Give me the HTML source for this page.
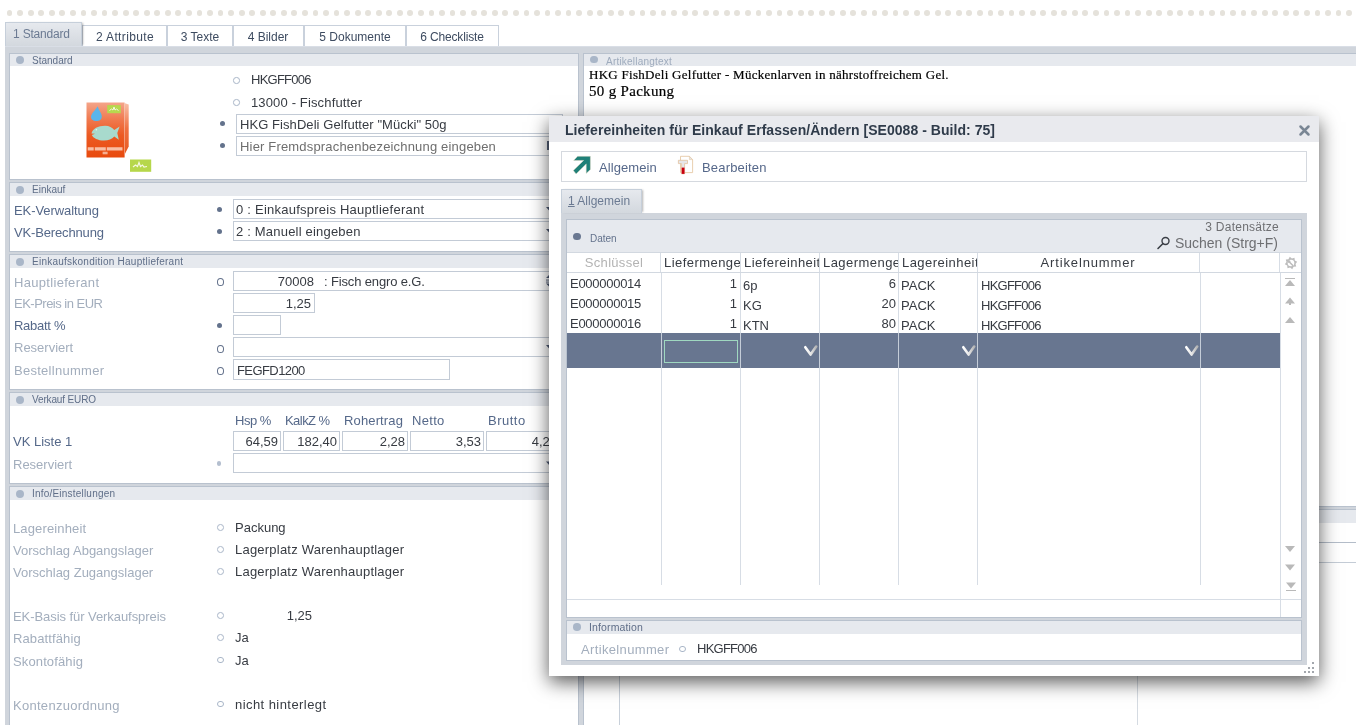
<!DOCTYPE html><html><head><meta charset="utf-8"><style>
*{margin:0;padding:0}
html,body{width:1356px;height:725px;overflow:hidden;background:#fff;position:relative}
body{font-family:'Liberation Sans', sans-serif}
.b{position:absolute}
.t{position:absolute;white-space:nowrap;font-family:'Liberation Sans', sans-serif;will-change:transform}
</style></head><body>
<div class="b" style="left:0;top:0;width:1356px;height:25px;overflow:hidden">
<div class="b" style="left:6.70px;top:10.10px;width:5.8px;height:5.8px;border-radius:50%;background:#e5e2db"></div>
<div class="b" style="left:17.25px;top:10.10px;width:5.8px;height:5.8px;border-radius:50%;background:#e5e2db"></div>
<div class="b" style="left:27.79px;top:10.10px;width:5.8px;height:5.8px;border-radius:50%;background:#e5e2db"></div>
<div class="b" style="left:38.34px;top:10.10px;width:5.8px;height:5.8px;border-radius:50%;background:#e5e2db"></div>
<div class="b" style="left:48.89px;top:10.10px;width:5.8px;height:5.8px;border-radius:50%;background:#e5e2db"></div>
<div class="b" style="left:59.44px;top:10.10px;width:5.8px;height:5.8px;border-radius:50%;background:#e5e2db"></div>
<div class="b" style="left:69.98px;top:10.10px;width:5.8px;height:5.8px;border-radius:50%;background:#e5e2db"></div>
<div class="b" style="left:80.53px;top:10.10px;width:5.8px;height:5.8px;border-radius:50%;background:#e5e2db"></div>
<div class="b" style="left:91.08px;top:10.10px;width:5.8px;height:5.8px;border-radius:50%;background:#e5e2db"></div>
<div class="b" style="left:101.62px;top:10.10px;width:5.8px;height:5.8px;border-radius:50%;background:#e5e2db"></div>
<div class="b" style="left:112.17px;top:10.10px;width:5.8px;height:5.8px;border-radius:50%;background:#e5e2db"></div>
<div class="b" style="left:122.72px;top:10.10px;width:5.8px;height:5.8px;border-radius:50%;background:#e5e2db"></div>
<div class="b" style="left:133.26px;top:10.10px;width:5.8px;height:5.8px;border-radius:50%;background:#e5e2db"></div>
<div class="b" style="left:143.81px;top:10.10px;width:5.8px;height:5.8px;border-radius:50%;background:#e5e2db"></div>
<div class="b" style="left:154.36px;top:10.10px;width:5.8px;height:5.8px;border-radius:50%;background:#e5e2db"></div>
<div class="b" style="left:164.91px;top:10.10px;width:5.8px;height:5.8px;border-radius:50%;background:#e5e2db"></div>
<div class="b" style="left:175.45px;top:10.10px;width:5.8px;height:5.8px;border-radius:50%;background:#e5e2db"></div>
<div class="b" style="left:186.00px;top:10.10px;width:5.8px;height:5.8px;border-radius:50%;background:#e5e2db"></div>
<div class="b" style="left:196.55px;top:10.10px;width:5.8px;height:5.8px;border-radius:50%;background:#e5e2db"></div>
<div class="b" style="left:207.09px;top:10.10px;width:5.8px;height:5.8px;border-radius:50%;background:#e5e2db"></div>
<div class="b" style="left:217.64px;top:10.10px;width:5.8px;height:5.8px;border-radius:50%;background:#e5e2db"></div>
<div class="b" style="left:228.19px;top:10.10px;width:5.8px;height:5.8px;border-radius:50%;background:#e5e2db"></div>
<div class="b" style="left:238.73px;top:10.10px;width:5.8px;height:5.8px;border-radius:50%;background:#e5e2db"></div>
<div class="b" style="left:249.28px;top:10.10px;width:5.8px;height:5.8px;border-radius:50%;background:#e5e2db"></div>
<div class="b" style="left:259.83px;top:10.10px;width:5.8px;height:5.8px;border-radius:50%;background:#e5e2db"></div>
<div class="b" style="left:270.38px;top:10.10px;width:5.8px;height:5.8px;border-radius:50%;background:#e5e2db"></div>
<div class="b" style="left:280.92px;top:10.10px;width:5.8px;height:5.8px;border-radius:50%;background:#e5e2db"></div>
<div class="b" style="left:291.47px;top:10.10px;width:5.8px;height:5.8px;border-radius:50%;background:#e5e2db"></div>
<div class="b" style="left:302.02px;top:10.10px;width:5.8px;height:5.8px;border-radius:50%;background:#e5e2db"></div>
<div class="b" style="left:312.56px;top:10.10px;width:5.8px;height:5.8px;border-radius:50%;background:#e5e2db"></div>
<div class="b" style="left:323.11px;top:10.10px;width:5.8px;height:5.8px;border-radius:50%;background:#e5e2db"></div>
<div class="b" style="left:333.66px;top:10.10px;width:5.8px;height:5.8px;border-radius:50%;background:#e5e2db"></div>
<div class="b" style="left:344.20px;top:10.10px;width:5.8px;height:5.8px;border-radius:50%;background:#e5e2db"></div>
<div class="b" style="left:354.75px;top:10.10px;width:5.8px;height:5.8px;border-radius:50%;background:#e5e2db"></div>
<div class="b" style="left:365.30px;top:10.10px;width:5.8px;height:5.8px;border-radius:50%;background:#e5e2db"></div>
<div class="b" style="left:375.85px;top:10.10px;width:5.8px;height:5.8px;border-radius:50%;background:#e5e2db"></div>
<div class="b" style="left:386.39px;top:10.10px;width:5.8px;height:5.8px;border-radius:50%;background:#e5e2db"></div>
<div class="b" style="left:396.94px;top:10.10px;width:5.8px;height:5.8px;border-radius:50%;background:#e5e2db"></div>
<div class="b" style="left:407.49px;top:10.10px;width:5.8px;height:5.8px;border-radius:50%;background:#e5e2db"></div>
<div class="b" style="left:418.03px;top:10.10px;width:5.8px;height:5.8px;border-radius:50%;background:#e5e2db"></div>
<div class="b" style="left:428.58px;top:10.10px;width:5.8px;height:5.8px;border-radius:50%;background:#e5e2db"></div>
<div class="b" style="left:439.13px;top:10.10px;width:5.8px;height:5.8px;border-radius:50%;background:#e5e2db"></div>
<div class="b" style="left:449.67px;top:10.10px;width:5.8px;height:5.8px;border-radius:50%;background:#e5e2db"></div>
<div class="b" style="left:460.22px;top:10.10px;width:5.8px;height:5.8px;border-radius:50%;background:#e5e2db"></div>
<div class="b" style="left:470.77px;top:10.10px;width:5.8px;height:5.8px;border-radius:50%;background:#e5e2db"></div>
<div class="b" style="left:481.32px;top:10.10px;width:5.8px;height:5.8px;border-radius:50%;background:#e5e2db"></div>
<div class="b" style="left:491.86px;top:10.10px;width:5.8px;height:5.8px;border-radius:50%;background:#e5e2db"></div>
<div class="b" style="left:502.41px;top:10.10px;width:5.8px;height:5.8px;border-radius:50%;background:#e5e2db"></div>
<div class="b" style="left:512.96px;top:10.10px;width:5.8px;height:5.8px;border-radius:50%;background:#e5e2db"></div>
<div class="b" style="left:523.50px;top:10.10px;width:5.8px;height:5.8px;border-radius:50%;background:#e5e2db"></div>
<div class="b" style="left:534.05px;top:10.10px;width:5.8px;height:5.8px;border-radius:50%;background:#e5e2db"></div>
<div class="b" style="left:544.60px;top:10.10px;width:5.8px;height:5.8px;border-radius:50%;background:#e5e2db"></div>
<div class="b" style="left:555.14px;top:10.10px;width:5.8px;height:5.8px;border-radius:50%;background:#e5e2db"></div>
<div class="b" style="left:565.69px;top:10.10px;width:5.8px;height:5.8px;border-radius:50%;background:#e5e2db"></div>
<div class="b" style="left:576.24px;top:10.10px;width:5.8px;height:5.8px;border-radius:50%;background:#e5e2db"></div>
<div class="b" style="left:586.79px;top:10.10px;width:5.8px;height:5.8px;border-radius:50%;background:#e5e2db"></div>
<div class="b" style="left:597.33px;top:10.10px;width:5.8px;height:5.8px;border-radius:50%;background:#e5e2db"></div>
<div class="b" style="left:607.88px;top:10.10px;width:5.8px;height:5.8px;border-radius:50%;background:#e5e2db"></div>
<div class="b" style="left:618.43px;top:10.10px;width:5.8px;height:5.8px;border-radius:50%;background:#e5e2db"></div>
<div class="b" style="left:628.97px;top:10.10px;width:5.8px;height:5.8px;border-radius:50%;background:#e5e2db"></div>
<div class="b" style="left:639.52px;top:10.10px;width:5.8px;height:5.8px;border-radius:50%;background:#e5e2db"></div>
<div class="b" style="left:650.07px;top:10.10px;width:5.8px;height:5.8px;border-radius:50%;background:#e5e2db"></div>
<div class="b" style="left:660.61px;top:10.10px;width:5.8px;height:5.8px;border-radius:50%;background:#e5e2db"></div>
<div class="b" style="left:671.16px;top:10.10px;width:5.8px;height:5.8px;border-radius:50%;background:#e5e2db"></div>
<div class="b" style="left:681.71px;top:10.10px;width:5.8px;height:5.8px;border-radius:50%;background:#e5e2db"></div>
<div class="b" style="left:692.26px;top:10.10px;width:5.8px;height:5.8px;border-radius:50%;background:#e5e2db"></div>
<div class="b" style="left:702.80px;top:10.10px;width:5.8px;height:5.8px;border-radius:50%;background:#e5e2db"></div>
<div class="b" style="left:713.35px;top:10.10px;width:5.8px;height:5.8px;border-radius:50%;background:#e5e2db"></div>
<div class="b" style="left:723.90px;top:10.10px;width:5.8px;height:5.8px;border-radius:50%;background:#e5e2db"></div>
<div class="b" style="left:734.44px;top:10.10px;width:5.8px;height:5.8px;border-radius:50%;background:#e5e2db"></div>
<div class="b" style="left:744.99px;top:10.10px;width:5.8px;height:5.8px;border-radius:50%;background:#e5e2db"></div>
<div class="b" style="left:755.54px;top:10.10px;width:5.8px;height:5.8px;border-radius:50%;background:#e5e2db"></div>
<div class="b" style="left:766.08px;top:10.10px;width:5.8px;height:5.8px;border-radius:50%;background:#e5e2db"></div>
<div class="b" style="left:776.63px;top:10.10px;width:5.8px;height:5.8px;border-radius:50%;background:#e5e2db"></div>
<div class="b" style="left:787.18px;top:10.10px;width:5.8px;height:5.8px;border-radius:50%;background:#e5e2db"></div>
<div class="b" style="left:797.73px;top:10.10px;width:5.8px;height:5.8px;border-radius:50%;background:#e5e2db"></div>
<div class="b" style="left:808.27px;top:10.10px;width:5.8px;height:5.8px;border-radius:50%;background:#e5e2db"></div>
<div class="b" style="left:818.82px;top:10.10px;width:5.8px;height:5.8px;border-radius:50%;background:#e5e2db"></div>
<div class="b" style="left:829.37px;top:10.10px;width:5.8px;height:5.8px;border-radius:50%;background:#e5e2db"></div>
<div class="b" style="left:839.91px;top:10.10px;width:5.8px;height:5.8px;border-radius:50%;background:#e5e2db"></div>
<div class="b" style="left:850.46px;top:10.10px;width:5.8px;height:5.8px;border-radius:50%;background:#e5e2db"></div>
<div class="b" style="left:861.01px;top:10.10px;width:5.8px;height:5.8px;border-radius:50%;background:#e5e2db"></div>
<div class="b" style="left:871.55px;top:10.10px;width:5.8px;height:5.8px;border-radius:50%;background:#e5e2db"></div>
<div class="b" style="left:882.10px;top:10.10px;width:5.8px;height:5.8px;border-radius:50%;background:#e5e2db"></div>
<div class="b" style="left:892.65px;top:10.10px;width:5.8px;height:5.8px;border-radius:50%;background:#e5e2db"></div>
<div class="b" style="left:903.20px;top:10.10px;width:5.8px;height:5.8px;border-radius:50%;background:#e5e2db"></div>
<div class="b" style="left:913.74px;top:10.10px;width:5.8px;height:5.8px;border-radius:50%;background:#e5e2db"></div>
<div class="b" style="left:924.29px;top:10.10px;width:5.8px;height:5.8px;border-radius:50%;background:#e5e2db"></div>
<div class="b" style="left:934.84px;top:10.10px;width:5.8px;height:5.8px;border-radius:50%;background:#e5e2db"></div>
<div class="b" style="left:945.38px;top:10.10px;width:5.8px;height:5.8px;border-radius:50%;background:#e5e2db"></div>
<div class="b" style="left:955.93px;top:10.10px;width:5.8px;height:5.8px;border-radius:50%;background:#e5e2db"></div>
<div class="b" style="left:966.48px;top:10.10px;width:5.8px;height:5.8px;border-radius:50%;background:#e5e2db"></div>
<div class="b" style="left:977.02px;top:10.10px;width:5.8px;height:5.8px;border-radius:50%;background:#e5e2db"></div>
<div class="b" style="left:987.57px;top:10.10px;width:5.8px;height:5.8px;border-radius:50%;background:#e5e2db"></div>
<div class="b" style="left:998.12px;top:10.10px;width:5.8px;height:5.8px;border-radius:50%;background:#e5e2db"></div>
<div class="b" style="left:1008.67px;top:10.10px;width:5.8px;height:5.8px;border-radius:50%;background:#e5e2db"></div>
<div class="b" style="left:1019.21px;top:10.10px;width:5.8px;height:5.8px;border-radius:50%;background:#e5e2db"></div>
<div class="b" style="left:1029.76px;top:10.10px;width:5.8px;height:5.8px;border-radius:50%;background:#e5e2db"></div>
<div class="b" style="left:1040.31px;top:10.10px;width:5.8px;height:5.8px;border-radius:50%;background:#e5e2db"></div>
<div class="b" style="left:1050.85px;top:10.10px;width:5.8px;height:5.8px;border-radius:50%;background:#e5e2db"></div>
<div class="b" style="left:1061.40px;top:10.10px;width:5.8px;height:5.8px;border-radius:50%;background:#e5e2db"></div>
<div class="b" style="left:1071.95px;top:10.10px;width:5.8px;height:5.8px;border-radius:50%;background:#e5e2db"></div>
<div class="b" style="left:1082.49px;top:10.10px;width:5.8px;height:5.8px;border-radius:50%;background:#e5e2db"></div>
<div class="b" style="left:1093.04px;top:10.10px;width:5.8px;height:5.8px;border-radius:50%;background:#e5e2db"></div>
<div class="b" style="left:1103.59px;top:10.10px;width:5.8px;height:5.8px;border-radius:50%;background:#e5e2db"></div>
<div class="b" style="left:1114.13px;top:10.10px;width:5.8px;height:5.8px;border-radius:50%;background:#e5e2db"></div>
<div class="b" style="left:1124.68px;top:10.10px;width:5.8px;height:5.8px;border-radius:50%;background:#e5e2db"></div>
<div class="b" style="left:1135.23px;top:10.10px;width:5.8px;height:5.8px;border-radius:50%;background:#e5e2db"></div>
<div class="b" style="left:1145.78px;top:10.10px;width:5.8px;height:5.8px;border-radius:50%;background:#e5e2db"></div>
<div class="b" style="left:1156.32px;top:10.10px;width:5.8px;height:5.8px;border-radius:50%;background:#e5e2db"></div>
<div class="b" style="left:1166.87px;top:10.10px;width:5.8px;height:5.8px;border-radius:50%;background:#e5e2db"></div>
<div class="b" style="left:1177.42px;top:10.10px;width:5.8px;height:5.8px;border-radius:50%;background:#e5e2db"></div>
<div class="b" style="left:1187.96px;top:10.10px;width:5.8px;height:5.8px;border-radius:50%;background:#e5e2db"></div>
<div class="b" style="left:1198.51px;top:10.10px;width:5.8px;height:5.8px;border-radius:50%;background:#e5e2db"></div>
<div class="b" style="left:1209.06px;top:10.10px;width:5.8px;height:5.8px;border-radius:50%;background:#e5e2db"></div>
<div class="b" style="left:1219.60px;top:10.10px;width:5.8px;height:5.8px;border-radius:50%;background:#e5e2db"></div>
<div class="b" style="left:1230.15px;top:10.10px;width:5.8px;height:5.8px;border-radius:50%;background:#e5e2db"></div>
<div class="b" style="left:1240.70px;top:10.10px;width:5.8px;height:5.8px;border-radius:50%;background:#e5e2db"></div>
<div class="b" style="left:1251.25px;top:10.10px;width:5.8px;height:5.8px;border-radius:50%;background:#e5e2db"></div>
<div class="b" style="left:1261.79px;top:10.10px;width:5.8px;height:5.8px;border-radius:50%;background:#e5e2db"></div>
<div class="b" style="left:1272.34px;top:10.10px;width:5.8px;height:5.8px;border-radius:50%;background:#e5e2db"></div>
<div class="b" style="left:1282.89px;top:10.10px;width:5.8px;height:5.8px;border-radius:50%;background:#e5e2db"></div>
<div class="b" style="left:1293.43px;top:10.10px;width:5.8px;height:5.8px;border-radius:50%;background:#e5e2db"></div>
<div class="b" style="left:1303.98px;top:10.10px;width:5.8px;height:5.8px;border-radius:50%;background:#e5e2db"></div>
<div class="b" style="left:1314.53px;top:10.10px;width:5.8px;height:5.8px;border-radius:50%;background:#e5e2db"></div>
<div class="b" style="left:1325.07px;top:10.10px;width:5.8px;height:5.8px;border-radius:50%;background:#e5e2db"></div>
<div class="b" style="left:1335.62px;top:10.10px;width:5.8px;height:5.8px;border-radius:50%;background:#e5e2db"></div>
<div class="b" style="left:1346.17px;top:10.10px;width:5.8px;height:5.8px;border-radius:50%;background:#e5e2db"></div>
</div>
<div class="b" style="left:82px;top:25px;width:85px;height:21px;background:#fff;border:1px solid #c9d1dc;border-bottom:none;box-sizing:border-box;"></div>
<div class="b" style="left:167px;top:25px;width:66px;height:21px;background:#fff;border:1px solid #c9d1dc;border-bottom:none;box-sizing:border-box;"></div>
<div class="b" style="left:233px;top:25px;width:70.5px;height:21px;background:#fff;border:1px solid #c9d1dc;border-bottom:none;box-sizing:border-box;"></div>
<div class="b" style="left:303.5px;top:25px;width:102.0px;height:21px;background:#fff;border:1px solid #c9d1dc;border-bottom:none;box-sizing:border-box;"></div>
<div class="b" style="left:405.5px;top:25px;width:93.0px;height:21px;background:#fff;border:1px solid #c9d1dc;border-bottom:none;box-sizing:border-box;"></div>
<div class="t" style="left:-75.3175px;width:400px;text-align:center;top:29.84px;font-size:12px;line-height:14px;color:#3d4b60;letter-spacing:0.365px;">2 Attribute</div>
<div class="t" style="left:0.0px;width:400px;text-align:center;top:29.84px;font-size:12px;line-height:14px;color:#3d4b60;">3 Texte</div>
<div class="t" style="left:68.25px;width:400px;text-align:center;top:29.84px;font-size:12px;line-height:14px;color:#3d4b60;">4 Bilder</div>
<div class="t" style="left:154.5px;width:400px;text-align:center;top:29.84px;font-size:12px;line-height:14px;color:#3d4b60;">5 Dokumente</div>
<div class="t" style="left:251.925px;width:400px;text-align:center;top:29.84px;font-size:12px;line-height:14px;color:#3d4b60;letter-spacing:-0.15px;">6 Checkliste</div>
<div class="b" style="left:5px;top:46px;width:1351px;height:679px;background:#d0d5dc;"></div>
<div class="b" style="left:5px;top:22px;width:77px;height:24px;background:linear-gradient(#e6e9ee,#d3d8de);border:1px solid #c6cfda;border-bottom:none;box-sizing:border-box;box-shadow:2px 0 2px -1px rgba(0,0,0,0.3);"></div>
<div class="b" style="left:5px;top:46px;width:1351px;height:1px;background:#d9dee6;"></div>
<div class="t" style="left:12.9px;top:26.74px;font-size:12px;line-height:14px;color:#6b7a92;letter-spacing:-0.189px;">1 Standard</div>
<div class="b" style="left:9px;top:53px;width:570px;height:127px;background:#fff;border:1px solid #b9c2ce;box-sizing:border-box;"></div>
<div class="b" style="left:10px;top:54px;width:568px;height:12px;background:#e6e9ee;"></div>
<div class="b" style="left:16.00px;top:56.00px;width:8px;height:8px;border-radius:50%;box-sizing:border-box;background:#a9b6c8;"></div>
<div class="t" style="left:32.4px;top:55.13px;font-size:10px;line-height:12px;color:#5f6e88;">Standard</div>
<div class="b" style="left:9px;top:182px;width:570px;height:70px;background:#fff;border:1px solid #b9c2ce;box-sizing:border-box;"></div>
<div class="b" style="left:10px;top:183px;width:568px;height:13px;background:#e6e9ee;"></div>
<div class="b" style="left:16.00px;top:185.50px;width:8px;height:8px;border-radius:50%;box-sizing:border-box;background:#a9b6c8;"></div>
<div class="t" style="left:32.4px;top:184.13px;font-size:10px;line-height:12px;color:#5f6e88;">Einkauf</div>
<div class="b" style="left:9px;top:254px;width:570px;height:136px;background:#fff;border:1px solid #b9c2ce;box-sizing:border-box;"></div>
<div class="b" style="left:10px;top:255px;width:568px;height:13px;background:#e6e9ee;"></div>
<div class="b" style="left:16.00px;top:257.50px;width:8px;height:8px;border-radius:50%;box-sizing:border-box;background:#a9b6c8;"></div>
<div class="t" style="left:32.4px;top:256.14px;font-size:10px;line-height:12px;color:#5f6e88;letter-spacing:0.244px;">Einkaufskondition Hauptlieferant</div>
<div class="b" style="left:9px;top:392px;width:570px;height:92px;background:#fff;border:1px solid #b9c2ce;box-sizing:border-box;"></div>
<div class="b" style="left:10px;top:393px;width:568px;height:13px;background:#e6e9ee;"></div>
<div class="b" style="left:16.00px;top:395.50px;width:8px;height:8px;border-radius:50%;box-sizing:border-box;background:#a9b6c8;"></div>
<div class="t" style="left:32.4px;top:394.14px;font-size:10px;line-height:12px;color:#5f6e88;letter-spacing:-0.145px;">Verkauf EURO</div>
<div class="b" style="left:9px;top:486px;width:570px;height:260px;background:#fff;border:1px solid #b9c2ce;box-sizing:border-box;"></div>
<div class="b" style="left:10px;top:487px;width:568px;height:13px;background:#e6e9ee;"></div>
<div class="b" style="left:16.00px;top:489.50px;width:8px;height:8px;border-radius:50%;box-sizing:border-box;background:#a9b6c8;"></div>
<div class="t" style="left:32.4px;top:488.14px;font-size:10px;line-height:12px;color:#5f6e88;letter-spacing:0.206px;">Info/Einstellungen</div>
<div class="b" style="left:583px;top:53px;width:800px;height:700px;background:#fff;border:1px solid #b9c2ce;box-sizing:border-box;"></div>
<div class="b" style="left:584px;top:54px;width:800px;height:12px;background:#e6e9ee;"></div>
<div class="b" style="left:590.25px;top:55.55px;width:7.5px;height:7.5px;border-radius:50%;box-sizing:border-box;background:#a9b6c8;"></div>
<div class="t" style="left:606px;top:55.94px;font-size:10px;line-height:12px;color:#9eabbd;letter-spacing:0.207px;">Artikellangtext</div>
<div class="t" style="left:589.4px;top:66.51px;font-size:13px;line-height:16px;color:#000;font-family:'Liberation Serif', serif;letter-spacing:0.277px;-webkit-text-stroke:0.2px #000;">HKG FishDeli Gelfutter - Mückenlarven in nährstoffreichem Gel.</div>
<div class="t" style="left:589.4px;top:81.84px;font-size:15px;line-height:18px;color:#000;font-family:'Liberation Serif', serif;letter-spacing:0.305px;-webkit-text-stroke:0.2px #000;">50 g Packung</div>
<div class="b" style="left:233.25px;top:77.25px;width:6.5px;height:6.5px;border-radius:50%;box-sizing:border-box;border:1px solid #a9b6c8;"></div>
<div class="t" style="left:251px;top:71.60px;font-size:13px;line-height:16px;color:#373b42;letter-spacing:-0.75px;">HKGFF006</div>
<div class="b" style="left:233.25px;top:99.25px;width:6.5px;height:6.5px;border-radius:50%;box-sizing:border-box;border:1px solid #a9b6c8;"></div>
<div class="t" style="left:251px;top:95.00px;font-size:13px;line-height:16px;color:#373b42;letter-spacing:0.144px;">13000 - Fischfutter</div>
<div class="b" style="left:220.00px;top:121.00px;width:5px;height:5px;border-radius:50%;box-sizing:border-box;background:#63728c;"></div>
<div class="b" style="left:236px;top:114px;width:327px;height:20px;background:#fff;border:1px solid #c3cbd6;box-sizing:border-box;"></div>
<div class="t" style="left:239.6px;top:116.50px;font-size:13px;line-height:16px;color:#373b42;letter-spacing:0.07px;">HKG FishDeli Gelfutter "Mücki" 50g</div>
<div class="b" style="left:220.00px;top:143.00px;width:5px;height:5px;border-radius:50%;box-sizing:border-box;background:#63728c;"></div>
<div class="b" style="left:236px;top:136px;width:327px;height:20px;background:#fff;border:1px solid #c3cbd6;box-sizing:border-box;"></div>
<div class="t" style="left:239.6px;top:138.50px;font-size:13px;line-height:16px;color:#6e6e6e;letter-spacing:0.176px;">Hier Fremdsprachenbezeichnung eingeben</div>
<svg class="b" style="left:84px;top:100px" width="70" height="75" viewBox="84 100 70 75">
<defs><linearGradient id="og" x1="0" y1="0" x2="0" y2="1"><stop offset="0" stop-color="#f4a58a"/><stop offset="0.3" stop-color="#f07a50"/><stop offset="0.6" stop-color="#ec5a22"/><stop offset="1" stop-color="#e84a0e"/></linearGradient>
<linearGradient id="sg" x1="0" y1="0" x2="0" y2="1"><stop offset="0" stop-color="#f8c0a8"/><stop offset="0.5" stop-color="#f07040"/><stop offset="1" stop-color="#e85a20"/></linearGradient></defs>
<polygon points="125,103.3 128.7,104.5 128.7,146.4 125,153.8" fill="url(#sg)"/>
<rect x="86.5" y="102.5" width="38.1" height="55" fill="url(#og)"/>
<path d="M97.7,106.2 C95.5,110 91,113.5 91,117 C91,119.5 93.5,121.1 96.4,121.1 C99.5,121.1 101.8,119.5 101.8,116.5 C101.8,113 98.8,110.5 97.7,106.2Z" fill="#5ab5ea"/>
<rect x="107.2" y="105.1" width="13.6" height="8.1" fill="#b7d84e"/>
<path d="M109.5,110.5 l2,-1.5 l1.5,1 l1,-3 l1,3 l1.5,-1 l2,1.5" stroke="#f4f8e0" stroke-width="1" fill="none"/>
<path d="M91.5,133.5 C92.5,128.5 98,125.7 105,125.7 C109.5,125.7 112,127.5 114.3,130 L119.6,126.5 L117.3,133.1 L118.8,139.7 L114.3,136.5 C112,139 108.5,140.6 104,140.6 C98,140.6 93,138 91.8,135 L95,133.8 Z" fill="#a8dacd"/>
<circle cx="96.4" cy="129.8" r="0.8" fill="#e8f6f2"/>
<path d="M87.7,147.2 h6 v3.3 h-6z M94.8,147.2 h11 v3.3 h-11z M106.8,147.2 h15.7 v3.3 h-15.7z" fill="#fbd9c8" opacity="0.8"/>
<rect x="102.6" y="151.7" width="5" height="2.6" fill="#fbd9c8" opacity="0.7"/>
<rect x="130" y="159.5" width="21.2" height="12.3" fill="#b6d74b"/>
<path d="M133,167 l2.5,-2 l2,1.5 l1.5,-4 l1.5,4 l2,-1.5 l1.5,2 l3,-0.5" stroke="#f4f8e0" stroke-width="1.2" fill="none"/>
</svg>
<div class="t" style="left:13.8px;top:203.00px;font-size:13px;line-height:16px;color:#556889;letter-spacing:-0.083px;">EK-Verwaltung</div>
<div class="b" style="left:217.20px;top:207.00px;width:5px;height:5px;border-radius:50%;box-sizing:border-box;background:#63728c;"></div>
<div class="b" style="left:233px;top:199px;width:330px;height:20px;background:#fff;border:1px solid #c3cbd6;box-sizing:border-box;"></div>
<div class="t" style="left:235.7px;top:201.80px;font-size:13px;line-height:16px;color:#373b42;letter-spacing:0.237px;">0 : Einkaufspreis Hauptlieferant</div>
<div class="t" style="left:13.8px;top:225.00px;font-size:13px;line-height:16px;color:#556889;letter-spacing:-0.15px;">VK-Berechnung</div>
<div class="b" style="left:217.20px;top:229.00px;width:5px;height:5px;border-radius:50%;box-sizing:border-box;background:#63728c;"></div>
<div class="b" style="left:233px;top:221px;width:330px;height:20px;background:#fff;border:1px solid #c3cbd6;box-sizing:border-box;"></div>
<div class="t" style="left:235.7px;top:223.80px;font-size:13px;line-height:16px;color:#373b42;letter-spacing:0.195px;">2 : Manuell eingeben</div>
<div class="t" style="left:13.5px;top:274.50px;font-size:13px;line-height:16px;color:#a3aebd;letter-spacing:0.312px;">Hauptlieferant</div>
<div class="b" style="left:216.85px;top:278.00px;width:7.3px;height:8px;border-radius:50%;box-sizing:border-box;border:1.1px solid #63718b"></div>
<div class="b" style="left:233px;top:271px;width:330px;height:20px;background:#fff;border:1px solid #c3cbd6;box-sizing:border-box;"></div>
<div class="t" style="left:-85.60000000000002px;width:400px;text-align:right;top:274.00px;font-size:13px;line-height:16px;color:#373b42;">70008</div>
<div class="t" style="left:324.4px;top:274.00px;font-size:13px;line-height:16px;color:#373b42;letter-spacing:-0.147px;">: Fisch engro e.G.</div>
<div class="t" style="left:13.5px;top:296.40px;font-size:13px;line-height:16px;color:#a3aebd;letter-spacing:-0.507px;">EK-Preis in EUR</div>
<div class="b" style="left:233px;top:293px;width:82px;height:20px;background:#fff;border:1px solid #c3cbd6;box-sizing:border-box;"></div>
<div class="t" style="left:-88.60000000000002px;width:400px;text-align:right;top:296.00px;font-size:13px;line-height:16px;color:#373b42;">1,25</div>
<div class="t" style="left:13.5px;top:318.20px;font-size:13px;line-height:16px;color:#556889;letter-spacing:-0.264px;">Rabatt %</div>
<div class="b" style="left:217.10px;top:323.00px;width:5px;height:5px;border-radius:50%;box-sizing:border-box;background:#63728c;"></div>
<div class="b" style="left:233px;top:315px;width:48px;height:20px;background:#fff;border:1px solid #c3cbd6;box-sizing:border-box;"></div>
<div class="t" style="left:13.5px;top:340.20px;font-size:13px;line-height:16px;color:#a3aebd;">Reserviert</div>
<div class="b" style="left:216.85px;top:344.60px;width:7.3px;height:8px;border-radius:50%;box-sizing:border-box;border:1.1px solid #63718b"></div>
<div class="b" style="left:233px;top:337px;width:330px;height:20px;background:#fff;border:1px solid #c3cbd6;box-sizing:border-box;"></div>
<div class="t" style="left:13.5px;top:363.00px;font-size:13px;line-height:16px;color:#a3aebd;letter-spacing:0.275px;">Bestellnummer</div>
<div class="b" style="left:216.85px;top:366.50px;width:7.3px;height:8px;border-radius:50%;box-sizing:border-box;border:1.1px solid #63718b"></div>
<div class="b" style="left:233px;top:359px;width:217px;height:21px;background:#fff;border:1px solid #c3cbd6;box-sizing:border-box;"></div>
<div class="t" style="left:236.5px;top:362.50px;font-size:13px;line-height:16px;color:#373b42;letter-spacing:-0.581px;">FEGFD1200</div>
<div class="t" style="left:234.5px;top:413.30px;font-size:13px;line-height:16px;color:#556889;letter-spacing:-0.5px;">Hsp %</div>
<div class="t" style="left:285.4px;top:413.30px;font-size:13px;line-height:16px;color:#556889;letter-spacing:-0.55px;">KalkZ %</div>
<div class="t" style="left:344.2px;top:413.30px;font-size:13px;line-height:16px;color:#556889;letter-spacing:0.138px;">Rohertrag</div>
<div class="t" style="left:412.4px;top:413.30px;font-size:13px;line-height:16px;color:#556889;letter-spacing:0.312px;">Netto</div>
<div class="t" style="left:488px;top:413.30px;font-size:13px;line-height:16px;color:#556889;letter-spacing:0.5px;">Brutto</div>
<div class="t" style="left:13.3px;top:434.40px;font-size:13px;line-height:16px;color:#556889;">VK Liste 1</div>
<div class="b" style="left:233px;top:431px;width:48px;height:19.5px;background:#fff;border:1px solid #c3cbd6;box-sizing:border-box;"></div>
<div class="t" style="left:-122px;width:400px;text-align:right;top:433.50px;font-size:13px;line-height:16px;color:#373b42;">64,59</div>
<div class="b" style="left:283px;top:431px;width:57px;height:19.5px;background:#fff;border:1px solid #c3cbd6;box-sizing:border-box;"></div>
<div class="t" style="left:-63px;width:400px;text-align:right;top:433.50px;font-size:13px;line-height:16px;color:#373b42;">182,40</div>
<div class="b" style="left:342px;top:431px;width:65.5px;height:19.5px;background:#fff;border:1px solid #c3cbd6;box-sizing:border-box;"></div>
<div class="t" style="left:4.5px;width:400px;text-align:right;top:433.50px;font-size:13px;line-height:16px;color:#373b42;">2,28</div>
<div class="b" style="left:410px;top:431px;width:74px;height:19.5px;background:#fff;border:1px solid #c3cbd6;box-sizing:border-box;"></div>
<div class="t" style="left:81px;width:400px;text-align:right;top:433.50px;font-size:13px;line-height:16px;color:#373b42;">3,53</div>
<div class="b" style="left:486px;top:431px;width:74px;height:19.5px;background:#fff;border:1px solid #c3cbd6;box-sizing:border-box;"></div>
<div class="t" style="left:156.5px;width:400px;text-align:right;top:433.50px;font-size:13px;line-height:16px;color:#373b42;">4,28</div>
<div class="t" style="left:13.3px;top:456.60px;font-size:13px;line-height:16px;color:#a3aebd;">Reserviert</div>
<div class="b" style="left:216.75px;top:461.25px;width:4.5px;height:4.5px;border-radius:50%;box-sizing:border-box;background:#b4bfcf;"></div>
<div class="b" style="left:233px;top:453px;width:330px;height:19.5px;background:#fff;border:1px solid #c3cbd6;box-sizing:border-box;"></div>
<div class="t" style="left:13.3px;top:521.40px;font-size:13px;line-height:16px;color:#a3aebd;letter-spacing:0.132px;">Lagereinheit</div>
<div class="b" style="left:217.10px;top:524.10px;width:6.8px;height:6.8px;border-radius:50%;box-sizing:border-box;border:1px solid #a9b6c8;"></div>
<div class="t" style="left:235px;top:520.40px;font-size:13px;line-height:16px;color:#373b42;">Packung</div>
<div class="t" style="left:13.3px;top:543.40px;font-size:13px;line-height:16px;color:#a3aebd;">Vorschlag Abgangslager</div>
<div class="b" style="left:217.10px;top:546.10px;width:6.8px;height:6.8px;border-radius:50%;box-sizing:border-box;border:1px solid #a9b6c8;"></div>
<div class="t" style="left:235px;top:542.40px;font-size:13px;line-height:16px;color:#373b42;letter-spacing:0.218px;">Lagerplatz Warenhauptlager</div>
<div class="t" style="left:13.3px;top:565.40px;font-size:13px;line-height:16px;color:#a3aebd;">Vorschlag Zugangslager</div>
<div class="b" style="left:217.10px;top:568.10px;width:6.8px;height:6.8px;border-radius:50%;box-sizing:border-box;border:1px solid #a9b6c8;"></div>
<div class="t" style="left:235px;top:564.40px;font-size:13px;line-height:16px;color:#373b42;letter-spacing:0.218px;">Lagerplatz Warenhauptlager</div>
<div class="t" style="left:13.3px;top:609.40px;font-size:13px;line-height:16px;color:#a3aebd;letter-spacing:-0.064px;">EK-Basis für Verkaufspreis</div>
<div class="b" style="left:217.10px;top:612.10px;width:6.8px;height:6.8px;border-radius:50%;box-sizing:border-box;border:1px solid #a9b6c8;"></div>
<div class="t" style="left:13.3px;top:631.40px;font-size:13px;line-height:16px;color:#a3aebd;letter-spacing:0.12px;">Rabattfähig</div>
<div class="b" style="left:217.10px;top:634.10px;width:6.8px;height:6.8px;border-radius:50%;box-sizing:border-box;border:1px solid #a9b6c8;"></div>
<div class="t" style="left:235px;top:630.40px;font-size:13px;line-height:16px;color:#373b42;">Ja</div>
<div class="t" style="left:13.3px;top:653.90px;font-size:13px;line-height:16px;color:#a3aebd;letter-spacing:0.125px;">Skontofähig</div>
<div class="b" style="left:217.10px;top:656.60px;width:6.8px;height:6.8px;border-radius:50%;box-sizing:border-box;border:1px solid #a9b6c8;"></div>
<div class="t" style="left:235px;top:652.90px;font-size:13px;line-height:16px;color:#373b42;">Ja</div>
<div class="t" style="left:13.3px;top:697.90px;font-size:13px;line-height:16px;color:#a3aebd;letter-spacing:0.282px;">Kontenzuordnung</div>
<div class="b" style="left:217.10px;top:700.60px;width:6.8px;height:6.8px;border-radius:50%;box-sizing:border-box;border:1px solid #a9b6c8;"></div>
<div class="t" style="left:235px;top:696.90px;font-size:13px;line-height:16px;color:#373b42;letter-spacing:0.437px;">nicht hinterlegt</div>
<div class="t" style="left:-87.60000000000002px;width:400px;text-align:right;top:608.40px;font-size:13px;line-height:16px;color:#373b42;">1,25</div>
<svg class="b" style="left:0;top:0" width="1356" height="725"><path d="M546,207 L553,207 L549.5,211 Z M546,229 L553,229 L549.5,233 Z M546,345 L553,345 L549.5,349 Z M546,461.5 L553,461.5 L549.5,465.5 Z M546,278 L552,278 L549,275 Z M546,283.5 L552,283.5 L549,286.5 Z" fill="#4d5973"/><rect x="546" y="279.6" width="6" height="0.9" fill="#4d5973"/><rect x="546" y="281.6" width="6" height="0.9" fill="#4d5973"/><rect x="547" y="141" width="3" height="9" fill="#56627a"/></svg>
<div class="b" style="left:1300px;top:506px;width:56px;height:4px;background:#d0d5dc;border-top:1px solid #b9c2ce;border-bottom:1px solid #b9c2ce;box-sizing:border-box;"></div>
<div class="b" style="left:1300px;top:510px;width:56px;height:12.5px;background:#e6e9ee;"></div>
<div class="b" style="left:1300px;top:542px;width:56px;height:1px;background:#b4bdc9;"></div>
<div class="b" style="left:1300px;top:562px;width:56px;height:1px;background:#c4ccd6;"></div>
<div class="b" style="left:578px;top:676px;width:6px;height:49px;background:#d0d5dc;border-left:1px solid #b9c2ce;border-right:1px solid #b9c2ce;box-sizing:border-box;"></div>
<div class="b" style="left:619px;top:676px;width:1px;height:49px;background:#c8d0da;"></div>
<div class="b" style="left:1137px;top:676px;width:1px;height:49px;background:#d5dbe2;"></div>
<div class="b" style="left:549px;top:116px;width:770px;height:560px;background:#fff;box-shadow:0 6px 18px rgba(0,0,0,0.65);"></div>
<div class="b" style="left:549px;top:116px;width:770px;height:26px;background:#e9eaee;"></div>
<div class="t" style="left:565px;top:122.25px;font-size:14px;line-height:17px;color:#2f3b4a;font-weight:bold;letter-spacing:0.046px;">Liefereinheiten für Einkauf Erfassen/Ändern [SE0088 - Build: 75]</div>
<svg class="b" style="left:1297px;top:123px" width="15" height="15" viewBox="0 0 15 15"><path d="M3.5,3.5 L11.5,11.5 M11.5,3.5 L3.5,11.5" stroke="#7a8694" stroke-width="2.5" stroke-linecap="round"/></svg>
<div class="b" style="left:561px;top:151px;width:746px;height:31px;background:#fff;border:1px solid #d5d9df;box-sizing:border-box;"></div>
<svg class="b" style="left:570px;top:153px" width="24" height="24" viewBox="0 0 24 24"><path d="M3.6,7.45 L7.6,3.3 L20.4,3.3 L20.4,16.6 L16.2,20.4 L16.2,10.9 L6.1,20.9 L3.3,17.5 L13.6,7.45 Z" fill="#1f8078" stroke="#e9dcc8" stroke-width="0.5" stroke-linejoin="miter"/></svg>
<div class="t" style="left:598.6px;top:159.50px;font-size:13px;line-height:16px;color:#56688a;letter-spacing:0.087px;">Allgemein</div>
<svg class="b" style="left:674px;top:153px" width="24" height="24" viewBox="0 0 24 24">
<path d="M6.5,3.3 L15.4,3.3 L18.6,6.6 L18.6,19.6 L6.5,19.6 Z" fill="#fff" stroke="#e6c9a6" stroke-width="0.9"/>
<path d="M15.4,3.3 L15.4,6.6 L18.6,6.6 Z" fill="#e4e4e6" stroke="#e6c9a6" stroke-width="0.6"/>
<path d="M4.4,7.3 L13.5,7.3 L13.5,10.6 L10.6,10.6 L10.6,20.8 L7.6,20.8 L7.6,10.6 L4.4,10.6 Z" fill="#e6e7ea" stroke="#e2c29e" stroke-width="0.8"/>
<rect x="7.7" y="14.6" width="2.8" height="6.3" fill="#c9000f"/>
</svg>
<div class="t" style="left:702px;top:159.50px;font-size:13px;line-height:16px;color:#56688a;letter-spacing:0.167px;">Bearbeiten</div>
<div class="b" style="left:561px;top:213px;width:746px;height:452px;background:#d0d5dc;"></div>
<div class="b" style="left:561px;top:189px;width:81px;height:24px;background:linear-gradient(#e6e9ee,#d3d8de);border:1px solid #c6cfda;border-bottom:none;box-sizing:border-box;box-shadow:2px 0 2px -1px rgba(0,0,0,0.3);"></div>
<div class="t" style="left:568.2px;top:193.84px;font-size:12px;line-height:14px;color:#6b7a92;"><u>1</u> Allgemein</div>
<div class="b" style="left:566px;top:219px;width:736px;height:399px;background:#fff;border:1px solid #b9c2ce;box-sizing:border-box;"></div>
<div class="b" style="left:567px;top:220px;width:734px;height:32px;background:#e6e9ee;"></div>
<div class="b" style="left:573.25px;top:232.75px;width:7.5px;height:7.5px;border-radius:50%;box-sizing:border-box;background:#6a7891;"></div>
<div class="t" style="left:589.7px;top:232.73px;font-size:10px;line-height:12px;color:#63728c;">Daten</div>
<div class="t" style="left:878.55px;width:400px;text-align:right;top:220.34px;font-size:12px;line-height:14px;color:#6e6f72;letter-spacing:0.25px;">3 Datensätze</div>
<div class="t" style="left:877.7px;width:400px;text-align:right;top:234.95px;font-size:14px;line-height:17px;color:#6e6f72;">Suchen (Strg+F)</div>
<svg class="b" style="left:1156px;top:236px" width="15" height="14" viewBox="0 0 15 14"><circle cx="9.5" cy="5" r="3.5" fill="none" stroke="#3b3f46" stroke-width="1.4"/><path d="M7,7.5 L2,12.5" stroke="#3b3f46" stroke-width="1.6" stroke-linecap="round"/></svg>
<div class="b" style="left:567px;top:252px;width:734px;height:1px;background:#d2d8e0;"></div>
<div class="b" style="left:567px;top:272px;width:734px;height:1px;background:#d2d8e0;"></div>
<div class="b" style="left:660px;top:253px;width:1px;height:19px;background:#d7dde5;"></div>
<div class="b" style="left:740px;top:253px;width:1px;height:19px;background:#d7dde5;"></div>
<div class="b" style="left:819px;top:253px;width:1px;height:19px;background:#d7dde5;"></div>
<div class="b" style="left:898px;top:253px;width:1px;height:19px;background:#d7dde5;"></div>
<div class="b" style="left:977px;top:253px;width:1px;height:19px;background:#d7dde5;"></div>
<div class="b" style="left:1199px;top:253px;width:1px;height:19px;background:#d7dde5;"></div>
<div class="b" style="left:1279px;top:253px;width:1px;height:19px;background:#d7dde5;"></div>
<div class="b" style="left:661px;top:273px;width:1px;height:312px;background:#d7dde5;"></div>
<div class="b" style="left:740px;top:273px;width:1px;height:312px;background:#d7dde5;"></div>
<div class="b" style="left:819px;top:273px;width:1px;height:312px;background:#d7dde5;"></div>
<div class="b" style="left:898px;top:273px;width:1px;height:312px;background:#d7dde5;"></div>
<div class="b" style="left:977px;top:273px;width:1px;height:312px;background:#d7dde5;"></div>
<div class="b" style="left:1200px;top:273px;width:1px;height:312px;background:#d7dde5;"></div>
<div class="b" style="left:1280px;top:273px;width:1px;height:344px;background:#d7dde5;"></div>
<div class="b" style="left:567px;top:599px;width:734px;height:1px;background:#d7dde5;"></div>
<div class="t" style="left:413.65px;width:400px;text-align:center;top:254.80px;font-size:13px;line-height:16px;color:#b3b3b3;letter-spacing:0.3px;">Schlüssel</div>
<div class="b" style="left:661px;top:253px;width:79px;height:19px;overflow:hidden"><div class="t" style="left:2.5px;top:0px;font-size:13px;line-height:19px;letter-spacing:0.45px;color:#373b42">Liefermenge</div></div>
<div class="b" style="left:741px;top:253px;width:78px;height:19px;overflow:hidden"><div class="t" style="left:2.5px;top:0px;font-size:13px;line-height:19px;letter-spacing:0.45px;color:#373b42">Liefereinheit</div></div>
<div class="b" style="left:820px;top:253px;width:78px;height:19px;overflow:hidden"><div class="t" style="left:2.5px;top:0px;font-size:13px;line-height:19px;letter-spacing:0.45px;color:#373b42">Lagermenge</div></div>
<div class="b" style="left:899px;top:253px;width:78px;height:19px;overflow:hidden"><div class="t" style="left:2.5px;top:0px;font-size:13px;line-height:19px;letter-spacing:0.45px;color:#373b42">Lagereinheit</div></div>
<div class="t" style="left:888.425px;width:400px;text-align:center;top:254.80px;font-size:13px;line-height:16px;color:#373b42;letter-spacing:0.85px;">Artikelnummer</div>
<svg class="b" style="left:1284px;top:256px" width="14" height="14" viewBox="0 0 14 14"><path d="M13.18,5.77 L11.51,7.90 L12.24,10.50 L9.56,10.82 L8.23,13.18 L6.10,11.51 L3.50,12.24 L3.18,9.56 L0.82,8.23 L2.49,6.10 L1.76,3.50 L4.44,3.18 L5.77,0.82 L7.90,2.49 L10.50,1.76 L10.82,4.44Z" fill="#bdbdbd"/><circle cx="7" cy="7" r="3.3" fill="#fff"/><path d="M4.6,5.2 L8.6,9.2" stroke="#bdbdbd" stroke-width="1.6" stroke-linecap="round"/><circle cx="5" cy="5.6" r="1.4" fill="#bdbdbd"/></svg>
<div class="t" style="left:569.7px;top:276.30px;font-size:13px;line-height:16px;color:#373b42;letter-spacing:-0.272px;">E000000014</div>
<div class="t" style="left:337px;width:400px;text-align:right;top:276.30px;font-size:13px;line-height:16px;color:#373b42;">1</div>
<div class="t" style="left:743px;top:277.90px;font-size:13px;line-height:16px;color:#373b42;">6p</div>
<div class="t" style="left:496px;width:400px;text-align:right;top:276.30px;font-size:13px;line-height:16px;color:#373b42;">6</div>
<div class="t" style="left:901.3px;top:278.10px;font-size:13px;line-height:16px;color:#373b42;">PACK</div>
<div class="t" style="left:981px;top:278.10px;font-size:13px;line-height:16px;color:#373b42;letter-spacing:-0.75px;">HKGFF006</div>
<div class="t" style="left:569.7px;top:296.30px;font-size:13px;line-height:16px;color:#373b42;letter-spacing:-0.272px;">E000000015</div>
<div class="t" style="left:337px;width:400px;text-align:right;top:296.30px;font-size:13px;line-height:16px;color:#373b42;">1</div>
<div class="t" style="left:743px;top:297.90px;font-size:13px;line-height:16px;color:#373b42;">KG</div>
<div class="t" style="left:496px;width:400px;text-align:right;top:296.30px;font-size:13px;line-height:16px;color:#373b42;">20</div>
<div class="t" style="left:901.3px;top:298.10px;font-size:13px;line-height:16px;color:#373b42;">PACK</div>
<div class="t" style="left:981px;top:298.10px;font-size:13px;line-height:16px;color:#373b42;letter-spacing:-0.75px;">HKGFF006</div>
<div class="t" style="left:569.7px;top:316.30px;font-size:13px;line-height:16px;color:#373b42;letter-spacing:-0.272px;">E000000016</div>
<div class="t" style="left:337px;width:400px;text-align:right;top:316.30px;font-size:13px;line-height:16px;color:#373b42;">1</div>
<div class="t" style="left:743px;top:317.90px;font-size:13px;line-height:16px;color:#373b42;">KTN</div>
<div class="t" style="left:496px;width:400px;text-align:right;top:316.30px;font-size:13px;line-height:16px;color:#373b42;">80</div>
<div class="t" style="left:901.3px;top:318.10px;font-size:13px;line-height:16px;color:#373b42;">PACK</div>
<div class="t" style="left:981px;top:318.10px;font-size:13px;line-height:16px;color:#373b42;letter-spacing:-0.75px;">HKGFF006</div>
<div class="b" style="left:567px;top:333px;width:713px;height:34.5px;background:#687690;"></div>
<div class="b" style="left:661px;top:333px;width:1px;height:34.5px;background:#c5cdd8;"></div>
<div class="b" style="left:740px;top:333px;width:1px;height:34.5px;background:#c5cdd8;"></div>
<div class="b" style="left:819px;top:333px;width:1px;height:34.5px;background:#c5cdd8;"></div>
<div class="b" style="left:898px;top:333px;width:1px;height:34.5px;background:#c5cdd8;"></div>
<div class="b" style="left:977px;top:333px;width:1px;height:34.5px;background:#c5cdd8;"></div>
<div class="b" style="left:1200px;top:333px;width:1px;height:34.5px;background:#c5cdd8;"></div>
<div class="b" style="left:664px;top:340px;width:74px;height:23px;border:1px solid #9fd8c0;box-sizing:border-box;"></div>
<svg class="b" style="left:802.5px;top:344px" width="16" height="14" viewBox="0 0 16 14"><defs><linearGradient id="cg810" x1="0" y1="0" x2="1" y2="0"><stop offset="0" stop-color="#ffffff"/><stop offset="0.5" stop-color="#e6e6e6"/><stop offset="1" stop-color="#b4b4b4"/></linearGradient></defs><path d="M2.3,3.2 L7.6,10.6 L13.2,2.6" fill="none" stroke="url(#cg810)" stroke-width="2.6" stroke-linecap="round" stroke-linejoin="round"/></svg>
<svg class="b" style="left:960.5px;top:344px" width="16" height="14" viewBox="0 0 16 14"><defs><linearGradient id="cg968" x1="0" y1="0" x2="1" y2="0"><stop offset="0" stop-color="#ffffff"/><stop offset="0.5" stop-color="#e6e6e6"/><stop offset="1" stop-color="#b4b4b4"/></linearGradient></defs><path d="M2.3,3.2 L7.6,10.6 L13.2,2.6" fill="none" stroke="url(#cg968)" stroke-width="2.6" stroke-linecap="round" stroke-linejoin="round"/></svg>
<svg class="b" style="left:1184px;top:344px" width="16" height="14" viewBox="0 0 16 14"><defs><linearGradient id="cg1192" x1="0" y1="0" x2="1" y2="0"><stop offset="0" stop-color="#ffffff"/><stop offset="0.5" stop-color="#e6e6e6"/><stop offset="1" stop-color="#b4b4b4"/></linearGradient></defs><path d="M2.3,3.2 L7.6,10.6 L13.2,2.6" fill="none" stroke="url(#cg1192)" stroke-width="2.6" stroke-linecap="round" stroke-linejoin="round"/></svg>
<svg class="b" style="left:0;top:0" width="1356" height="725"><path d="M1285,286 L1295,286 L1290,280 Z" fill="#b9b9b9"/></svg>
<div class="b" style="left:1285px;top:278px;width:10px;height:1.2px;background:#b9b9b9;"></div>
<svg class="b" style="left:0;top:0" width="1356" height="725"><path d="M1285,303.5 L1295,303.5 L1290,297.5 Z" fill="#b9b9b9"/></svg>
<div class="b" style="left:1289px;top:302.5px;width:2px;height:2px;background:#b9b9b9;"></div>
<svg class="b" style="left:0;top:0" width="1356" height="725"><path d="M1285,323 L1295,323 L1290,317 Z" fill="#b9b9b9"/></svg>
<svg class="b" style="left:0;top:0" width="1356" height="725"><path d="M1285,546 L1295,546 L1290,552 Z" fill="#b9b9b9"/></svg>
<svg class="b" style="left:0;top:0" width="1356" height="725"><path d="M1285,564.5 L1295,564.5 L1290,570.5 Z" fill="#b9b9b9"/></svg>
<div class="b" style="left:1289px;top:564.5px;width:2px;height:2px;background:#b9b9b9;"></div>
<svg class="b" style="left:0;top:0" width="1356" height="725"><path d="M1286,582.5 L1296,582.5 L1291,588.5 Z" fill="#b9b9b9"/></svg>
<div class="b" style="left:1286px;top:590px;width:10px;height:1.2px;background:#b9b9b9;"></div>
<div class="b" style="left:566px;top:620px;width:736px;height:41px;background:#fff;border:1px solid #b9c2ce;box-sizing:border-box;"></div>
<div class="b" style="left:567px;top:621px;width:734px;height:12.7px;background:#e6e9ee;"></div>
<div class="b" style="left:573.15px;top:623.45px;width:7.5px;height:7.5px;border-radius:50%;box-sizing:border-box;background:#a9b6c8;"></div>
<div class="t" style="left:589.4px;top:620.76px;font-size:10.5px;line-height:13px;color:#5f6e88;letter-spacing:0.125px;">Information</div>
<div class="t" style="left:580.8px;top:642.30px;font-size:13px;line-height:16px;color:#a3aebd;letter-spacing:0.35px;">Artikelnummer</div>
<div class="b" style="left:679.25px;top:645.75px;width:6.5px;height:6.5px;border-radius:50%;box-sizing:border-box;border:1px solid #a9b6c8;"></div>
<div class="t" style="left:697px;top:640.50px;font-size:13px;line-height:16px;color:#373b42;letter-spacing:-0.75px;">HKGFF006</div>
<div class="b" style="left:1312px;top:662px;width:2px;height:2px;background:#a3a7ad;"></div>
<div class="b" style="left:1308px;top:666.5px;width:2px;height:2px;background:#a3a7ad;"></div>
<div class="b" style="left:1312px;top:666.5px;width:2px;height:2px;background:#a3a7ad;"></div>
<div class="b" style="left:1303.5px;top:671px;width:2px;height:2px;background:#a3a7ad;"></div>
<div class="b" style="left:1308px;top:671px;width:2px;height:2px;background:#a3a7ad;"></div>
<div class="b" style="left:1312px;top:671px;width:2px;height:2px;background:#a3a7ad;"></div>
</body></html>
